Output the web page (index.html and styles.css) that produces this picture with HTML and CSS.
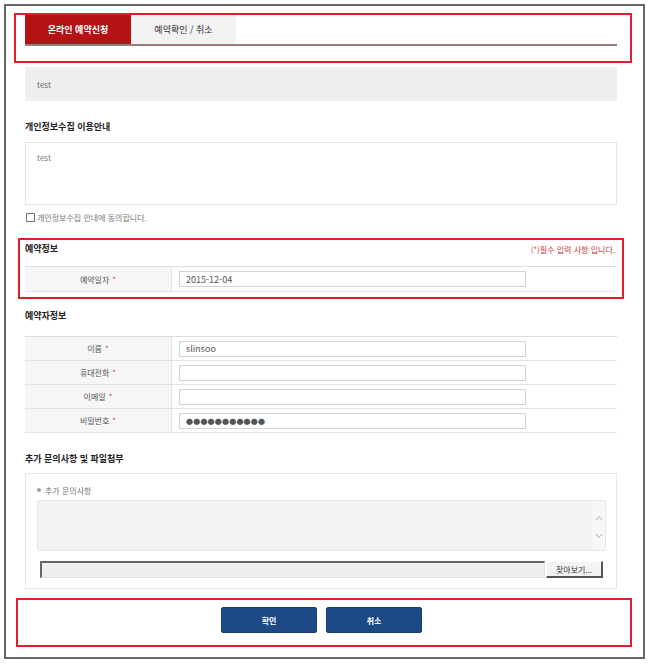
FILE: index.html
```html
<!DOCTYPE html>
<html lang="ko">
<head>
<meta charset="utf-8">
<title>온라인 예약신청</title>
<link rel="stylesheet" href="styles.css">
</head>
<body>
<div class="frame">
  <div class="content">
    <div class="tabs">
      <div class="tab active">온라인 예약신청</div>
      <div class="tab">예약확인 / 취소</div>
    </div>

    <div class="notice">test</div>

    <h2 class="heading h1">개인정보수집 이용안내</h2>
    <div class="terms">test</div>
    <label class="agree"><span class="check"></span>개인정보수집 안내에 동의합니다.</label>

    <div class="heading-row h2">
      <h2 class="heading">예약정보</h2>
      <span class="req">(*)필수 입력 사항 입니다.</span>
    </div>
    <div class="table t1">
      <div class="row">
        <div class="label">예약일자 <span class="star">*</span></div>
        <div class="field"><div class="input">2015-12-04</div></div>
      </div>
    </div>

    <h2 class="heading h3">예약자정보</h2>
    <div class="table t2">
      <div class="row r24">
        <div class="label">이름 <span class="star">*</span></div>
        <div class="field"><div class="input">slinsoo</div></div>
      </div>
      <div class="row r24">
        <div class="label">휴대전화 <span class="star">*</span></div>
        <div class="field"><div class="input"></div></div>
      </div>
      <div class="row r24">
        <div class="label">이메일 <span class="star">*</span></div>
        <div class="field"><div class="input"></div></div>
      </div>
      <div class="row r24">
        <div class="label">비밀번호 <span class="star">*</span></div>
        <div class="field"><div class="input pw">●●●●●●●●●●●</div></div>
      </div>
    </div>

    <h2 class="heading h4">추가 문의사항 및 파일첨부</h2>
    <div class="extra">
      <div class="extra-label"><span class="dot"></span>추가 문의사항</div>
      <div class="textarea">
        <div class="scroll">
          <svg width="8" height="6" viewBox="0 0 8 6"><path d="M1 5 L4 1.5 L7 5" fill="none" stroke="#aaa" stroke-width="1"/></svg>
          <svg width="8" height="6" viewBox="0 0 8 6"><path d="M1 1 L4 4.5 L7 1" fill="none" stroke="#aaa" stroke-width="1"/></svg>
        </div>
      </div>
      <div class="file-row">
        <div class="file-text"></div>
        <div class="file-btn">찾아보기...</div>
      </div>
    </div>

    <div class="buttons">
      <div class="btn">확인</div>
      <div class="btn">취소</div>
    </div>
  </div>

  <div class="mark m1"></div>
  <div class="mark m2"></div>
  <div class="mark m3"></div>
</div>
</body>
</html>
```

FILE: styles.css
```css
* { box-sizing: border-box; }
html, body { margin: 0; padding: 0; background: #fff; }
body {
  font-family: "Noto Sans CJK KR", "Malgun Gothic", "Noto Sans", sans-serif;
  color: #333;
  font-size: 9px;
}
.frame {
  position: relative;
  margin: 4px 0 0 4px;
  width: 641px;
  height: 655px;
  border: 2px solid #666;
}
.content {
  padding: 9px 0 0 19px;
  width: 611px;
}

/* tabs */
.tabs {
  display: flex;
  height: 31px;
  border-bottom: 2px solid #9c7b7c;
}
.tab {
  width: 105px;
  height: 29px;
  background: #f2f2f2;
  color: #333;
  display: flex;
  align-items: center;
  justify-content: center;
  font-size: 9px;
  line-height: 1;
}
.tab.active {
  width: 106px;
  background: #b51216;
  color: #fff;
  font-weight: bold;
}

.notice {
  margin-top: 21px;
  height: 34px;
  background: #efefef;
  padding-left: 12px;
  display: flex;
  align-items: center;
  font-size: 8px;
  color: #666;
}

.heading {
  margin: 0;
  font-size: 9px;
  font-weight: bold;
  color: #222;
  height: 14px;
  line-height: 14px;
}
.h1 { margin-top: 19px; }
.terms {
  margin-top: 8px;
  height: 63px;
  border: 1px solid #e3e3e3;
  padding: 9px 0 0 11px;
  font-size: 8px;
  line-height: 12px;
  color: #777;
}
.agree {
  margin-top: 6px;
  height: 12px;
  display: flex;
  align-items: center;
  font-size: 8px;
  color: #777;
}
.check {
  width: 9px;
  height: 9px;
  border: 1px solid #777;
  margin: 0 2px 0 1px;
  background: #fff;
}

.heading-row {
  display: flex;
  justify-content: space-between;
  align-items: center;
  height: 14px;
}
.h2 { margin-top: 19px; }
.req {
  color: #c8373c;
  font-size: 8px;
  margin-right: 2px;
}

.table {
  border-top: 1px solid #dcdcdc;
}
.t1 { margin-top: 10px; }
.row {
  display: flex;
  height: 25px;
  border-bottom: 1px solid #e3e3e3;
}
.row.r24 { height: 24px; }
.label {
  width: 147px;
  background: #f6f6f6;
  border-right: 1px solid #e3e3e3;
  display: flex;
  align-items: center;
  justify-content: center;
  font-size: 8px;
  color: #555;
}
.star { color: #d0393e; margin-left: 3px; }
.field {
  flex: 1;
  display: flex;
  align-items: center;
  padding-left: 7px;
}
.input {
  width: 347px;
  height: 16px;
  border: 1px solid #d3d3d3;
  background: #fff;
  padding-left: 6px;
  display: flex;
  align-items: center;
  font-size: 9px;
  color: #555;
}
.input.pw {
  font-size: 7px;
  letter-spacing: 0.2px;
  color: #555;
}

.h3 { margin-top: 17px; }
.t2 { margin-top: 13px; }

.h4 { margin-top: 19px; }
.extra {
  margin-top: 7px;
  height: 116px;
  border: 1px solid #e8e8e8;
  padding: 9px 10px 0 11px;
}
.extra-label {
  height: 14px;
  display: flex;
  align-items: center;
  font-size: 8px;
  color: #777;
}
.dot {
  width: 4px;
  height: 4px;
  border-radius: 50%;
  background: #a0a0a0;
  margin-right: 4px;
}
.textarea {
  margin-top: 3px;
  height: 51px;
  background: #f3f3f3;
  border: 1px solid #e6e6e6;
  border-radius: 2px;
  display: flex;
  justify-content: flex-end;
}
.scroll {
  width: 13px;
  background: #f7f7f7;
  display: flex;
  flex-direction: column;
  align-items: center;
  justify-content: center;
  gap: 12px;
  padding-top: 2px;
}
.file-row {
  margin-top: 10px;
  height: 17px;
  display: flex;
  padding-left: 3px;
}
.file-text {
  width: 505px;
  height: 17px;
  background: #efefef;
  border-top: 2px solid #666;
  border-left: 2px solid #666;
  border-right: 1px solid #e0e0e0;
  border-bottom: 1px solid #e0e0e0;
}
.file-btn {
  margin-left: 1px;
  width: 57px;
  height: 17px;
  background: #f3f3f3;
  border-top: 1px solid #fff;
  border-left: 1px solid #fff;
  border-right: 2px solid #555;
  border-bottom: 2px solid #555;
  display: flex;
  align-items: center;
  justify-content: center;
  font-size: 8px;
  color: #333;
}

.buttons {
  margin-top: 18px;
  display: flex;
  justify-content: center;
  gap: 9px;
  padding-left: 1px;
}
.btn {
  width: 96px;
  height: 26px;
  background: #1c4a85;
  border: 1px solid #173f73;
  border-radius: 2px;
  color: #fff;
  font-size: 8px;
  font-weight: bold;
  display: flex;
  align-items: center;
  justify-content: center;
}

/* annotation overlays */
.mark {
  position: absolute;
  border: 2px solid #dc1f2b;
  pointer-events: none;
}
.m1 { left: 8px; top: 7px; width: 618px; height: 50px; }
.m2 { left: 12px; top: 232px; width: 606px; height: 61px; }
.m3 { left: 10px; top: 592px; width: 616px; height: 49px; }
```
